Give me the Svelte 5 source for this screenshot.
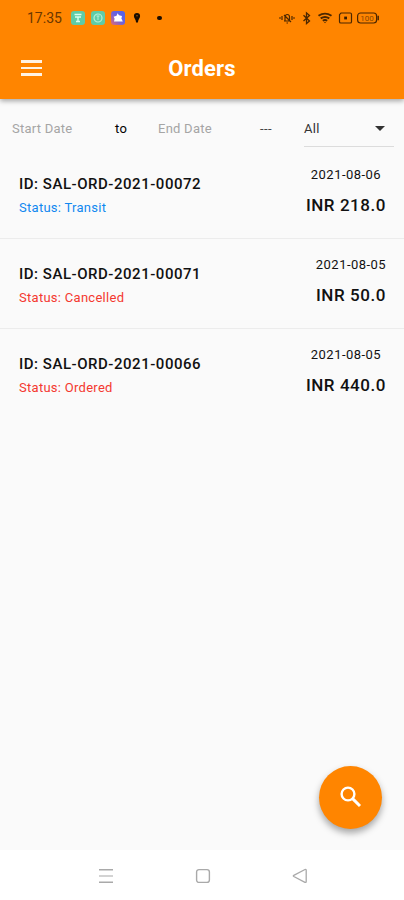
<script>
  let startDate = '';
  let endDate = '';
  let filter = 'All';

  const orders = [
    { id: 'SAL-ORD-2021-00072', status: 'Transit', date: '2021-08-06', total: '218.0' },
    { id: 'SAL-ORD-2021-00071', status: 'Cancelled', date: '2021-08-05', total: '50.0' },
    { id: 'SAL-ORD-2021-00066', status: 'Ordered', date: '2021-08-05', total: '440.0' }
  ];
</script>

<div class="screen">
  <header>
    <div class="status-bar">
      <span class="time">17:35</span>
      <div class="notifications">
        <svg width="14" height="14" viewBox="0 0 14 14">
          <rect width="14" height="14" rx="3" fill="#5fcba6" />
          <path d="M3.5 3.5h7M4 6h6M7 6v5M5 10.5h4" stroke="#d9fff0" stroke-width="1.4" fill="none" />
        </svg>
        <svg width="14" height="14" viewBox="0 0 14 14">
          <rect width="14" height="14" rx="3" fill="#5fcba6" />
          <circle cx="7" cy="7" r="4" stroke="#b5f0d9" stroke-width="1.2" fill="none" />
          <path d="M5.5 5h3M7 5v4" stroke="#b5f0d9" fill="none" />
        </svg>
        <svg width="14" height="14" viewBox="0 0 14 14">
          <defs>
            <linearGradient id="app-tile" x1="0" y1="1" x2="1" y2="0">
              <stop offset="0" stop-color="#e56a70" />
              <stop offset="0.5" stop-color="#6b63dc" />
              <stop offset="1" stop-color="#4b62ee" />
            </linearGradient>
          </defs>
          <rect width="14" height="14" rx="3" fill="url(#app-tile)" />
          <path d="M6.5 2.2l1.5 2 3 .8-.6 2.5 1.4 3H3l.6-2.8-1-2 3-.9z" fill="#fff" />
        </svg>
        <svg class="pin" width="8" height="12" viewBox="0 0 8 12">
          <path d="M4 1a3.1 3.1 0 0 0-3.1 3.1C.9 6.2 2.8 7.2 3.1 10.5h1.8C5.2 7.2 7.1 6.2 7.1 4.1A3.1 3.1 0 0 0 4 1z" fill="#1b0d00" />
          <circle cx="4" cy="3.8" r="0.8" fill="#a05200" />
        </svg>
        <span class="dot"></span>
      </div>
      <svg class="system" width="102" height="14" viewBox="0 0 102 14" fill="none" stroke="#4b2700">
        <!-- silent mode -->
        <path d="M1 7h2M4 5v4M14 5v4M15 7h2M6 10h6.5M7 10V6.5Q7 3.5 9.3 3.5T11.5 6.5V10M8.5 12h1.5M6 4l7 7" stroke-width="1.2" />
        <!-- bluetooth -->
        <path d="M25.5 4.3l6 5.6-3 2.6V1.8l3 2.6-6 5.6" stroke-width="1.3" />
        <!-- wifi -->
        <path d="M40.5 4.8Q47 .5 53.5 4.8M42.7 7.4Q47 4.5 51.3 7.4M44.8 9.8Q47 8.2 49.2 9.8" stroke-width="1.9" />
        <path d="M46 11h2l-1 1.3z" fill="#4b2700" stroke="none" />
        <!-- sim -->
        <path d="M63 2h9.2q1.3 0 1.3 1.3v7.4q0 1.3-1.3 1.3h-9.4q-1.3 0-1.3-1.3V3.7z" stroke-width="1.2" />
        <path d="M66.2 5.6h2.8v2.8h-2.8z" fill="#3a1e00" stroke="none" />
        <!-- battery -->
        <rect x="79.6" y="2" width="19" height="10" rx="3" stroke-width="1.2" />
        <path d="M100.2 4.7v4.6" stroke-width="1.5" />
        <text x="89.1" y="9.8" text-anchor="middle">100</text>
      </svg>
    </div>
    <div class="app-bar">
      <button class="menu" aria-label="Menu">
        <span></span>
        <span></span>
        <span></span>
      </button>
      <h1>Orders</h1>
    </div>
  </header>

  <main>
    <div class="filters">
      <span class="hint start">{startDate || 'Start Date'}</span>
      <span class="to">to</span>
      <span class="hint end">{endDate || 'End Date'}</span>
      <span class="dashes">---</span>
      <button class="select">
        {filter}
        <svg width="10" height="5" viewBox="0 0 10 5">
          <path d="M0 0h10L5 5z" fill="#333" />
        </svg>
      </button>
    </div>

    {#each orders as order}
      <div class="order">
        <div class="info">
          <div class="id">ID: {order.id}</div>
          <div class="status" class:transit={order.status === 'Transit'}>Status: {order.status}</div>
        </div>
        <div class="amount">
          <div class="date">{order.date}</div>
          <div class="total">INR {order.total}</div>
        </div>
      </div>
    {/each}

    <button class="fab" aria-label="Search">
      <svg width="22" height="22" viewBox="0 0 22 22" fill="none" stroke="#fff">
        <circle cx="8" cy="8" r="6.4" stroke-width="2.4" />
        <path d="M12.6 12.6l7.4 7.4" stroke-width="3" />
      </svg>
    </button>
  </main>

  <nav>
    <svg width="16" height="16" viewBox="0 0 16 16" fill="none">
      <path d="M1 1.8h14M1 14.2h14" stroke="#a9a9a9" stroke-width="1.4" />
      <path d="M1 8h14" stroke="#cfcfcf" stroke-width="1.8" />
    </svg>
    <svg width="16" height="16" viewBox="0 0 16 16" fill="none" stroke="#a9a9a9" stroke-width="1.4">
      <rect x="1.6" y="1.6" width="12.8" height="12.8" rx="2.4" />
    </svg>
    <svg width="16" height="16" viewBox="0 0 16 16" fill="none" stroke="#a9a9a9" stroke-width="1.3">
      <path d="M1.8 7.3L13 1.5q1.2-.5 1.2.8v11.2q0 1.3-1.2.8L1.8 8.5q-1-.6 0-1.2z" />
    </svg>
  </nav>
</div>

<style>
  :global(body) {
    background: #fafafa;
  }

  .screen {
    display: flex;
    flex-direction: column;
    height: 100vh;
    font-family: Roboto, 'Liberation Sans', sans-serif;
    color: #111;
  }

  button {
    border: none;
    padding: 0;
    background: none;
    font: inherit;
    color: inherit;
  }

  svg {
    display: block;
  }

  header {
    height: 99px;
    background: #ff8500;
    box-shadow: 0 2px 5px rgba(0, 0, 0, 0.35);
    z-index: 1;
  }

  .status-bar {
    display: flex;
    align-items: center;
    height: 36px;
    padding: 0 24px 0 27px;
  }

  .time {
    width: 44px;
    font-size: 14px;
    line-height: 18px;
    color: #6a3700;
  }

  .notifications {
    display: flex;
    align-items: center;
    gap: 6px;
  }

  .pin {
    margin-left: 2px;
  }

  .dot {
    width: 4.5px;
    height: 4.5px;
    margin-left: 10px;
    border-radius: 50%;
    background: #1b0d00;
  }

  .system {
    margin-left: auto;
  }

  .system text {
    font-size: 8px;
    stroke: none;
    fill: #8a4800;
  }

  .app-bar {
    display: grid;
    grid-template-columns: 60px 1fr 60px;
    align-items: center;
    height: 64px;
  }

  .menu {
    display: grid;
    gap: 4px;
    width: 21px;
    margin-left: 21px;
  }

  .menu span {
    height: 2.5px;
    background: #fff3e4;
  }

  h1 {
    margin: 0;
    padding-top: 2px;
    font-size: 22px;
    font-weight: 700;
    line-height: 26px;
    letter-spacing: 0.15px;
    text-align: center;
    color: #fff;
  }

  main {
    position: relative;
    flex: 1;
  }

  .filters {
    display: flex;
    height: 50px;
    padding: 10px 10px 0 12px;
    box-sizing: border-box;
    font-size: 13px;
    line-height: 39px;
  }

  .hint {
    color: #a5a5a5;
    letter-spacing: 0.25px;
  }

  .start {
    width: 103px;
  }

  .to {
    width: 43px;
    letter-spacing: 0.3px;
    color: #000;
  }

  .end {
    width: 102px;
  }

  .dashes {
    width: 44px;
    letter-spacing: 0.4px;
    color: #444;
  }

  .select {
    display: flex;
    flex: 1;
    align-items: center;
    justify-content: space-between;
    height: 38px;
    padding: 1px 9px 0 0;
    border-bottom: 1px solid #dcdcdc;
    box-sizing: border-box;
    letter-spacing: 0.3px;
    color: #333;
  }

  .order {
    display: flex;
    justify-content: space-between;
    height: 90px;
    padding: 16px 18px 0 19px;
    box-sizing: border-box;
    border-bottom: 1px solid #ececec;
  }

  .order:last-of-type {
    border-bottom: none;
  }

  .info {
    padding-top: 8px;
  }

  .id {
    font-size: 15px;
    font-weight: 500;
    line-height: 23px;
    letter-spacing: 0.53px;
  }

  .status {
    font-size: 13px;
    line-height: 24px;
    letter-spacing: 0.28px;
    color: #f4382f;
  }

  .status.transit {
    color: #1088f0;
  }

  .amount {
    text-align: center;
  }

  .date {
    font-size: 13px;
    line-height: 20px;
    letter-spacing: 0.45px;
  }

  .total {
    font-size: 17px;
    font-weight: 500;
    line-height: 40px;
    letter-spacing: 0.55px;
  }

  .fab {
    position: absolute;
    right: 22px;
    bottom: 21.5px;
    display: grid;
    place-items: center;
    width: 63px;
    height: 63px;
    border-radius: 50%;
    background: #ff8500;
    box-shadow: 0 4px 7px rgba(0, 0, 0, 0.35);
  }

  nav {
    display: flex;
    justify-content: center;
    align-items: center;
    gap: 81px;
    height: 50px;
    padding: 1px 0 0 1px;
    box-sizing: border-box;
    background: #fff;
  }
</style>
